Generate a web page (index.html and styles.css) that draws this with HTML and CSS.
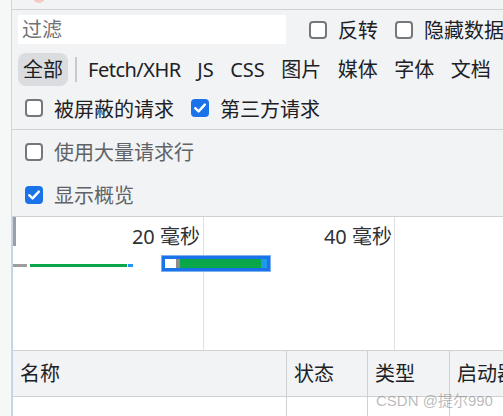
FILE: index.html
```html
<!DOCTYPE html>
<html lang="zh-CN">
<head>
<meta charset="utf-8">
<title>网络</title>
<link rel="stylesheet" href="styles.css">
</head>
<body>
<div class="side"></div>
<div class="main">
  <div class="topbar"><span class="rec"></span></div>
  <div class="filter-row">
    <div class="filter-input">过滤</div>
    <label class="cb"><span class="box"></span><span>反转</span></label>
    <label class="cb"><span class="box"></span><span>隐藏数据网址</span></label>
  </div>
  <div class="types">
    <span class="type active">全部</span>
    <span class="sep"></span>
    <span class="type latin">Fetch/XHR</span>
    <span class="type">JS</span>
    <span class="type">CSS</span>
    <span class="type">图片</span>
    <span class="type">媒体</span>
    <span class="type">字体</span>
    <span class="type">文档</span>
  </div>
  <div class="row3">
    <label class="cb"><span class="box"></span><span>被屏蔽的请求</span></label>
    <label class="cb"><span class="box on"><svg viewBox="0 0 18 18" width="18" height="18"><path d="M4.2 9.2 L7.6 12.4 L13.8 5.6" fill="none" stroke="#fff" stroke-width="2.4" stroke-linecap="round" stroke-linejoin="round"/></svg></span><span>第三方请求</span></label>
  </div>
  <div class="settings">
    <label class="cb dim"><span class="box"></span><span>使用大量请求行</span></label>
    <label class="cb dim"><span class="box on"><svg viewBox="0 0 18 18" width="18" height="18"><path d="M4.2 9.2 L7.6 12.4 L13.8 5.6" fill="none" stroke="#fff" stroke-width="2.4" stroke-linecap="round" stroke-linejoin="round"/></svg></span><span>显示概览</span></label>
  </div>
  <div class="overview">
    <div class="col c1"><span class="lbl">20 毫秒</span></div>
    <div class="col c2"><span class="lbl">40 毫秒</span></div>
    <div class="col c3"></div>
    <span class="marker"></span>
    <div class="bar1">
      <span class="b-gray"></span><span class="b-green"></span><span class="b-blue"></span>
    </div>
    <div class="bar2">
      <span class="b2-white"></span><span class="b2-gray"></span><span class="b2-green"></span><span class="b2-blue"></span>
    </div>
  </div>
  <div class="thead">
    <div class="th w1">名称</div>
    <div class="th w2">状态</div>
    <div class="th w3">类型</div>
    <div class="th w4">启动器</div>
  </div>
  <div class="tbody">
    <div class="td w1"></div>
    <div class="td w2"></div>
    <div class="td w3"></div>
    <div class="td w4"></div>
  </div>
</div>
<div class="watermark">CSDN @提尔990</div>
</body>
</html>
```

FILE: styles.css
```css
* { box-sizing: border-box; }
html, body { margin: 0; padding: 0; }
body {
  width: 503px;
  height: 416px;
  overflow: hidden;
  display: flex;
  font-family: "Noto Sans", "Noto Sans CJK SC", sans-serif;
  font-size: 20px;
  color: #202124;
  background: #f1f3f4;
  position: relative;
}
.side {
  width: 12px;
  flex: none;
  background: #f6f7f7;
  border-right: 1px solid #d4d6d8;
}
.main {
  flex: 1;
  min-width: 0;
  display: flex;
  flex-direction: column;
  background: #f1f3f4;
}
.topbar {
  height: 10px;
  flex: none;
  border-bottom: 1px solid #cfd1d4;
  overflow: hidden;
  display: flex;
}
.rec {
  width: 12px;
  height: 12px;
  border-radius: 50%;
  background: #f6c9c4;
  margin-top: -9px;
  margin-left: 21px;
}
.filter-row {
  display: flex;
  align-items: center;
  height: 39px;
  padding-left: 6px;
  white-space: nowrap;
}
.filter-input {
  width: 268px;
  height: 29px;
  flex: none;
  background: #fff;
  color: #6f7277;
  line-height: 29px;
  padding-left: 4px;
  margin-right: 23px;
}
.cb {
  display: flex;
  align-items: center;
  gap: 11px;
  white-space: nowrap;
  margin-right: 17px;
  flex: none;
}
.box {
  width: 18px;
  height: 18px;
  flex: none;
  border: 2px solid #75777b;
  border-radius: 4px;
  background: #fff;
  display: flex;
}
.box.on {
  background: #1a73e8;
  border: none;
}
.box svg { display: block; }
.types {
  display: flex;
  align-items: center;
  gap: 6.5px;
  height: 41px;
  padding: 4px 0 4px 6px;
  white-space: nowrap;
}
.type {
  height: 33px;
  line-height: 33px;
  padding: 0 5px;
  border-radius: 8px;
  flex: none;
}
.type.latin { letter-spacing: -0.5px; }
.type.active { background: #dadce0; }
.sep {
  width: 2px;
  height: 25px;
  background: #c7c9cc;
  flex: none;
}
.row3 {
  display: flex;
  align-items: center;
  height: 40px;
  padding: 0 0 3px 13px;
  border-bottom: 1px solid #cfd1d4;
}
.row3 .cb { margin-right: 17px; }
.settings {
  display: flex;
  flex-direction: column;
  padding-left: 13px;
  border-bottom: 1px solid #cfd1d4;
}
.settings .cb { height: 43px; }
.cb.dim { color: #5f6368; }
.overview {
  position: relative;
  height: 134px;
  flex: none;
  background: #fff;
  border-left: 1px solid #c5d2e6;
  border-bottom: 1px solid #cfd1d4;
  display: grid;
  grid-template-columns: 191px 191px 1fr;
}
.col {
  border-right: 1px solid #e0e0e0;
  text-align: right;
  padding: 6px 3px 0 0;
  line-height: 28px;
  color: #303134;
}
.col.c2 { padding-right: 2px; }
.col.c3 { border-right: none; }
.marker {
  position: absolute;
  left: 0;
  top: 0;
  width: 3px;
  height: 29px;
  background: #9aa0a6;
}
.bar1 {
  position: absolute;
  left: 0;
  top: 47px;
  height: 3px;
  display: flex;
}
.b-gray { width: 14px; background: #9e9e9e; margin-right: 3px; }
.b-green { width: 97px; background: #0aa64a; margin-right: 1px; }
.b-blue { width: 5px; background: #2196f3; }
.bar2 {
  position: absolute;
  left: 148px;
  top: 38px;
  width: 110px;
  height: 17px;
  background: #1a73e8;
  border: 1px solid #7fb0f0;
  padding: 3px 3px;
  display: flex;
}
.b2-white { width: 11px; background: #fff; }
.b2-gray { width: 4px; background: #8c8c8c; }
.b2-green { width: 82px; background: #0aa64a; }
.b2-blue { width: 6px; background: #1e9be8; }
.thead, .tbody {
  display: flex;
  border-left: 1px solid #c5d2e6;
  flex: none;
}
.thead {
  height: 46px;
  background: #f1f3f4;
  border-bottom: 1px solid #cfd1d4;
}
.tbody { flex: 1; background: #fff; }
.th, .td {
  border-right: 1px solid #cfd1d4;
  padding-left: 7px;
  white-space: nowrap;
  overflow: hidden;
  flex: none;
}
.th { line-height: 45px; }
.w1 { width: 274px; }
.w2 { width: 81px; }
.w3 { width: 82px; }
.w4 { flex: 1; border-right: none; }
.watermark {
  position: absolute;
  left: 376px;
  top: 389px;
  font-family: "Liberation Sans", "Noto Sans CJK SC", sans-serif;
  font-size: 15px;
  color: rgba(130, 130, 130, 0.55);
  white-space: nowrap;
}
```
